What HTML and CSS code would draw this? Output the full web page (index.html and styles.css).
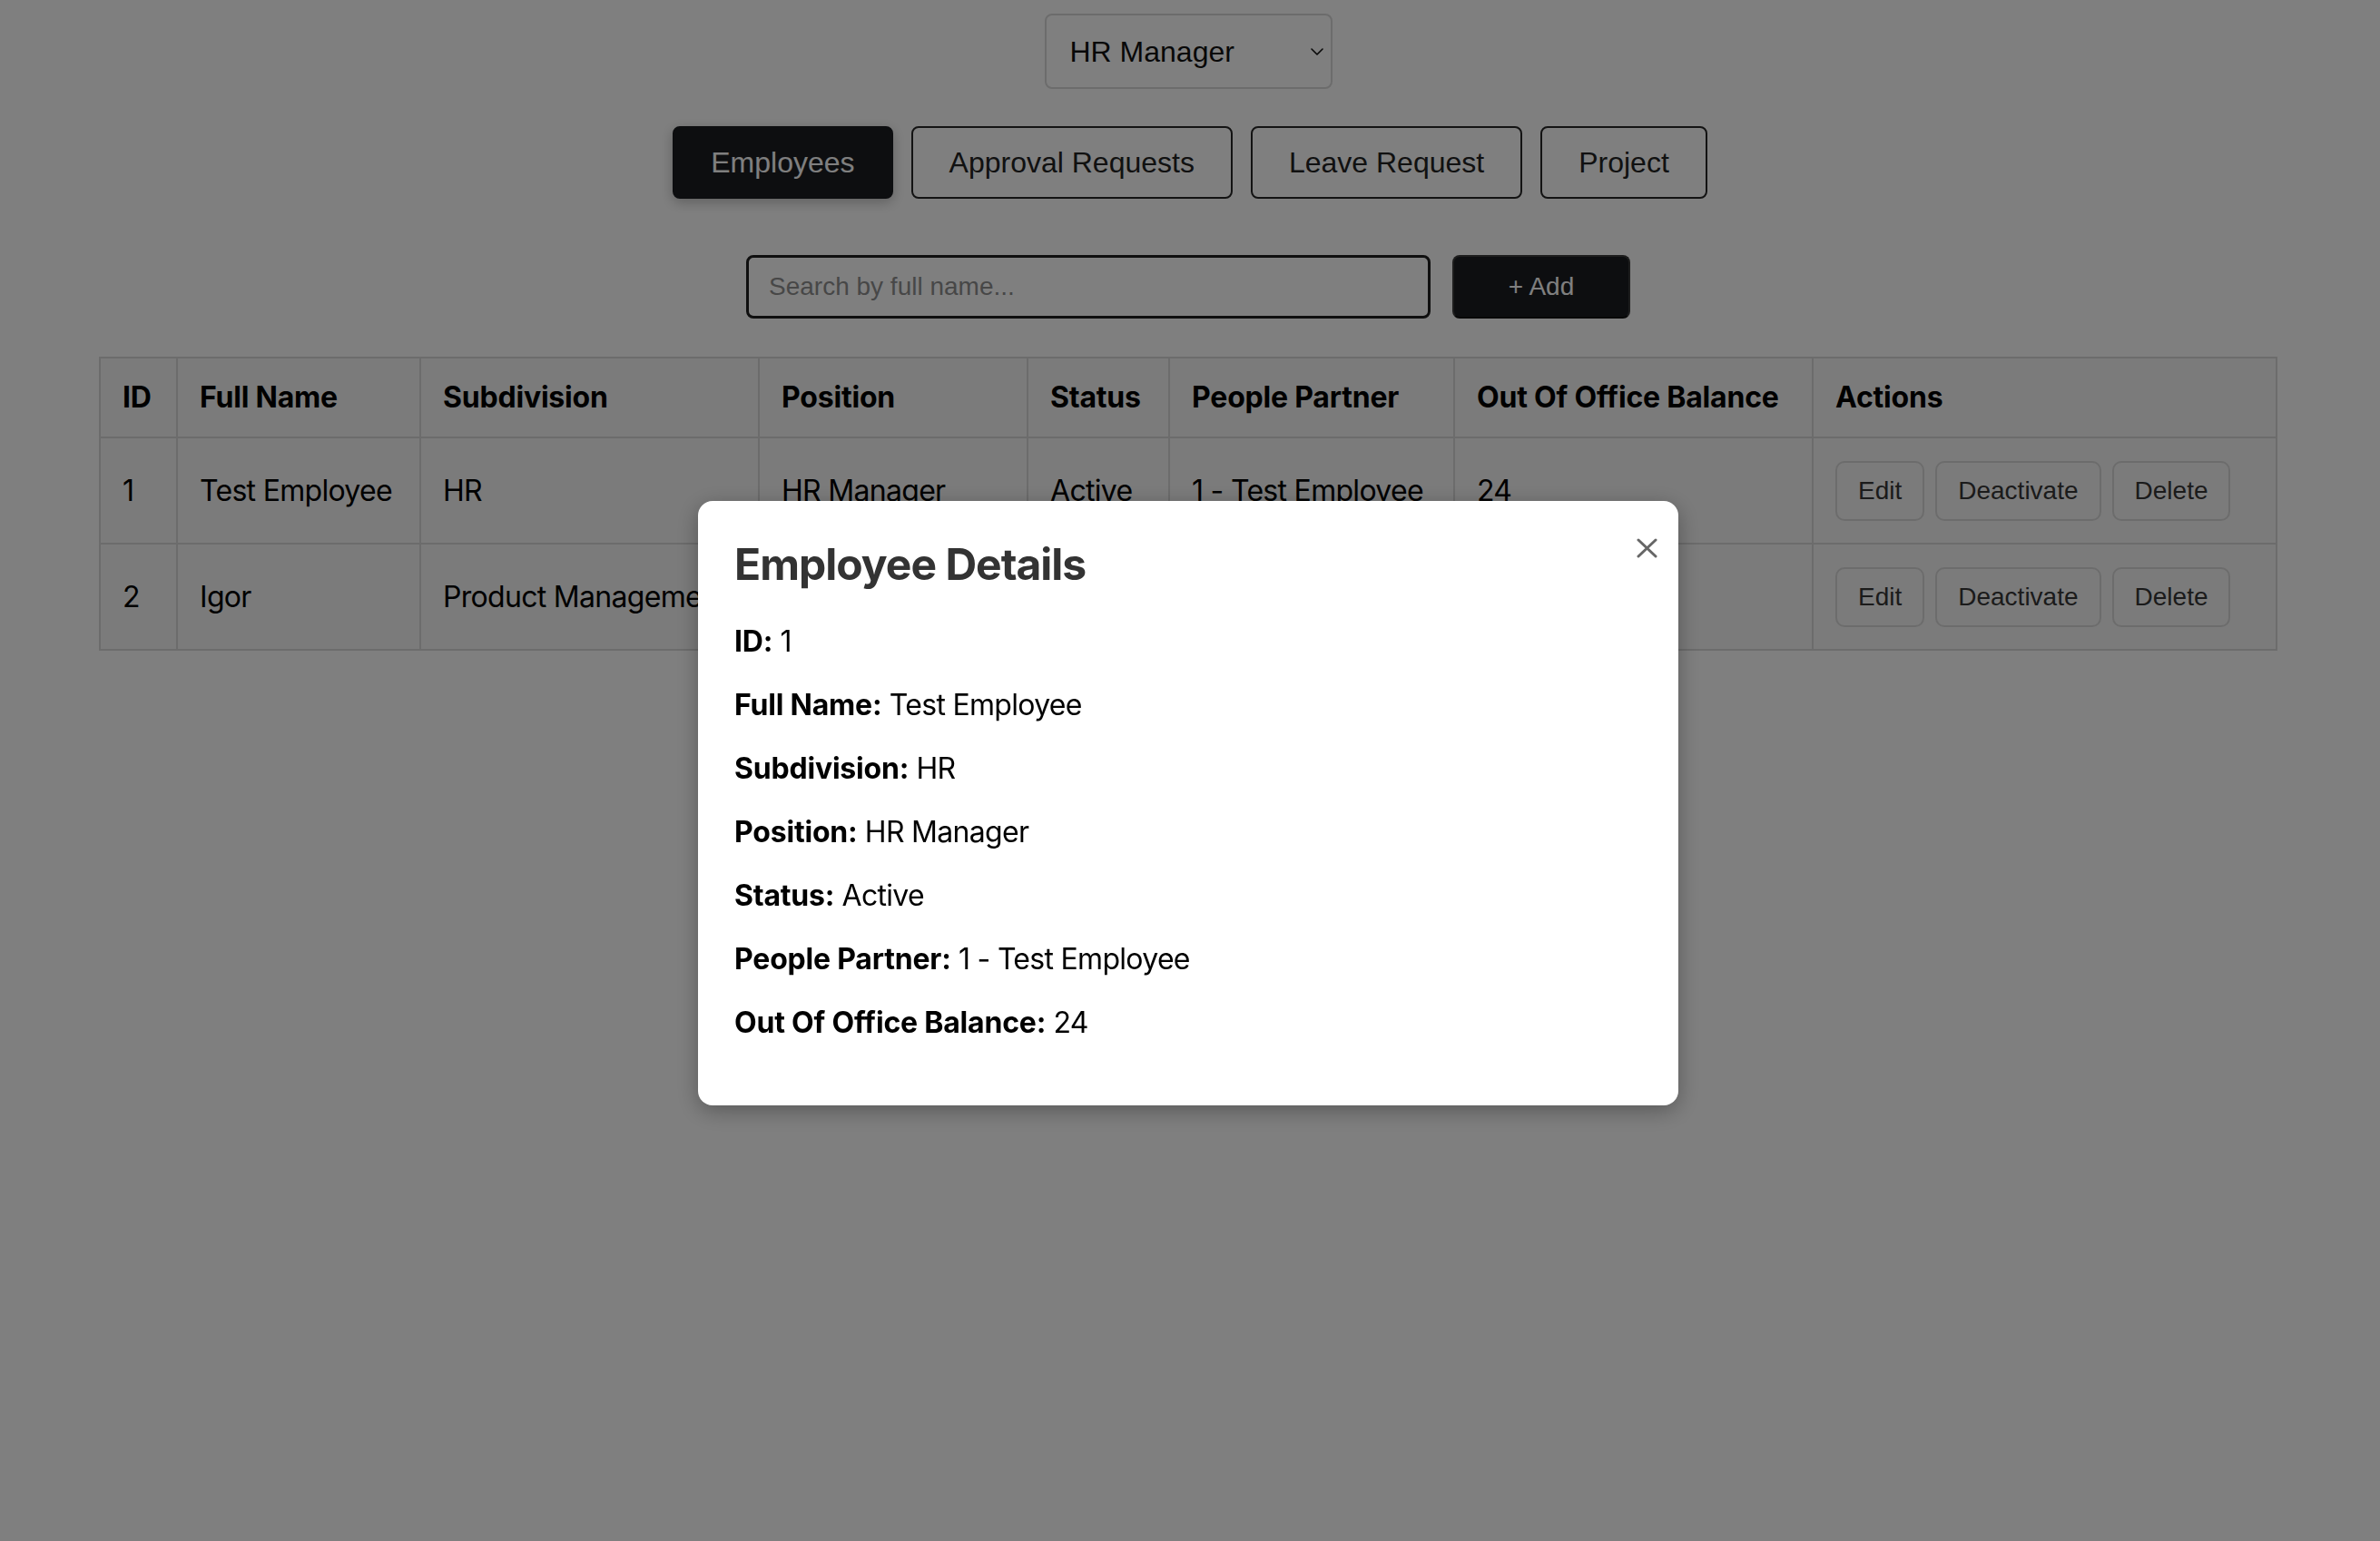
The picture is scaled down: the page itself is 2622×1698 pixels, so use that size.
FILE: index.html
```html
<!DOCTYPE html>
<html lang="en">
<head>
<meta charset="utf-8">
<title>Employees</title>
<link rel="stylesheet" href="styles.css">
</head>
<body>
<div class="app">
  <div class="role-select">
    <select class="role">
      <option>HR Manager</option>
      <option>Project Manager</option>
      <option>Employee</option>
    </select>
    <svg class="chev" viewBox="0 0 14 8" width="14" height="8" aria-hidden="true"><path d="M1 1 L7 7 L13 1" fill="none" stroke="#111" stroke-width="1.6" stroke-linecap="round" stroke-linejoin="round"/></svg>
  </div>

  <nav class="tabs">
    <button class="tab active">Employees</button>
    <button class="tab">Approval Requests</button>
    <button class="tab">Leave Request</button>
    <button class="tab">Project</button>
  </nav>

  <div class="toolbar">
    <input class="search" type="text" placeholder="Search by full name...">
    <button class="add">+ Add</button>
  </div>

  <table class="grid">
    <colgroup>
      <col class="c-id">
      <col class="c-name">
      <col class="c-sub">
      <col class="c-pos">
      <col class="c-status">
      <col class="c-pp">
      <col class="c-ooo">
      <col class="c-act">
    </colgroup>
    <thead>
      <tr>
        <th>ID</th>
        <th>Full Name</th>
        <th>Subdivision</th>
        <th>Position</th>
        <th>Status</th>
        <th>People Partner</th>
        <th>Out Of Office Balance</th>
        <th>Actions</th>
      </tr>
    </thead>
    <tbody>
      <tr>
        <td>1</td>
        <td>Test Employee</td>
        <td>HR</td>
        <td>HR Manager</td>
        <td>Active</td>
        <td>1 - Test Employee</td>
        <td>24</td>
        <td>
          <div class="actions">
            <button class="act">Edit</button>
            <button class="act">Deactivate</button>
            <button class="act">Delete</button>
          </div>
        </td>
      </tr>
      <tr>
        <td>2</td>
        <td>Igor</td>
        <td>Product Management</td>
        <td>Product Manager</td>
        <td>Active</td>
        <td>1 - Test Employee</td>
        <td></td>
        <td>
          <div class="actions">
            <button class="act">Edit</button>
            <button class="act">Deactivate</button>
            <button class="act">Delete</button>
          </div>
        </td>
      </tr>
    </tbody>
  </table>
</div>

<div class="overlay">
  <div class="modal">
    <button class="close" aria-label="Close">
      <svg viewBox="0 0 23 22" width="23" height="22" aria-hidden="true"><path d="M2 2 L21 20 M21 2 L2 20" fill="none" stroke="#666" stroke-width="3" stroke-linecap="round"/></svg>
    </button>
    <h2 class="modal-title">Employee Details</h2>
    <p class="row"><strong>ID:</strong> 1</p>
    <p class="row"><strong>Full Name:</strong> Test Employee</p>
    <p class="row"><strong>Subdivision:</strong> HR</p>
    <p class="row"><strong>Position:</strong> HR Manager</p>
    <p class="row"><strong>Status:</strong> Active</p>
    <p class="row"><strong>People Partner:</strong> 1 - Test Employee</p>
    <p class="row"><strong>Out Of Office Balance:</strong> 24</p>
  </div>
</div>
</body>
</html>
```

FILE: styles.css
```css
* { box-sizing: border-box; }

html, body {
  margin: 0;
  padding: 0;
  background: #ffffff;
}

body {
  font-family: Inter, "Noto Sans", sans-serif;
  color: #000;
  min-height: 1698px;
}

.app {
  display: flex;
  flex-direction: column;
  align-items: center;
  padding-top: 15px;
}

/* role select */
.role-select {
  position: relative;
  width: 317px;
  height: 83px;
  margin-bottom: 41px;
  margin-right: 4px;
}

.role {
  -webkit-appearance: none;
  appearance: none;
  width: 100%;
  height: 100%;
  border: 2px solid #d9d9d9;
  border-radius: 8px;
  background: #fff;
  font-family: "Liberation Sans", Arial, sans-serif;
  font-size: 32px;
  color: #111;
  padding: 0 0 0 26px;
}

.chev {
  position: absolute;
  right: 10px;
  top: 38px;
  pointer-events: none;
}

/* tabs */
.tabs {
  display: flex;
  gap: 20px;
  margin-bottom: 62px;
}

.tab {
  height: 80px;
  padding: 0 40px;
  border: 2px solid #262626;
  border-radius: 8px;
  background: #fff;
  font-family: "Liberation Sans", Arial, sans-serif;
  font-size: 32px;
  color: #222;
}

.tab.active {
  background: #1a1c20;
  border-color: #1a1c20;
  color: #fff;
  box-shadow: 0 4px 14px rgba(0, 0, 0, 0.25);
}

/* toolbar */
.toolbar {
  display: flex;
  align-items: center;
  gap: 24px;
  margin-bottom: 42px;
  margin-right: 4px;
}

.search {
  width: 754px;
  height: 70px;
  border: 3px solid #1e1e1e;
  border-radius: 8px;
  padding: 0 22px;
  font-family: "Liberation Sans", Arial, sans-serif;
  font-size: 28px;
  color: #111;
  background: #fff;
}

.search::placeholder {
  color: #8f8f8f;
}

.add {
  width: 196px;
  height: 70px;
  border: 2px solid #3a3a3a;
  border-bottom-color: #111;
  border-radius: 8px;
  background: #1a1c20;
  color: #fff;
  font-family: "Liberation Sans", Arial, sans-serif;
  font-size: 28px;
}

/* table */
.grid {
  border-collapse: collapse;
  table-layout: fixed;
  width: 2398px;
  margin: 0 auto;
  background: #f6f6f6;
  transform: translateX(-2px);
}

.c-id { width: 85px; }
.c-name { width: 268px; }
.c-sub { width: 373px; }
.c-pos { width: 296px; }
.c-status { width: 156px; }
.c-pp { width: 314px; }
.c-ooo { width: 395px; }
.c-act { width: 511px; }

.grid th,
.grid td {
  border: 2px solid #d8d8d8;
  padding: 24px;
  text-align: left;
  vertical-align: middle;
  font-size: 32px;
  line-height: 38px;
  white-space: nowrap;
  overflow: hidden;
}

.grid th {
  font-weight: 700;
  letter-spacing: -0.2px;
}

.grid td {
  font-weight: 400;
  letter-spacing: -0.7px;
}

.actions {
  display: flex;
  align-items: center;
  gap: 12px;
  height: 67px;
  letter-spacing: 0;
}

.act {
  height: 66px;
  padding: 0 23px;
  border: 2px solid #d9d9d9;
  border-radius: 10px;
  background: transparent;
  font-family: "Liberation Sans", Arial, sans-serif;
  font-size: 28px;
  color: #363636;
}

/* modal */
.overlay {
  position: fixed;
  inset: 0;
  background: rgba(0, 0, 0, 0.5);
  display: flex;
  justify-content: center;
  align-items: flex-start;
  padding-top: 552px;
}

.modal {
  position: relative;
  width: 1080px;
  padding: 40px;
  background: #fff;
  border-radius: 16px;
  box-shadow: 0 6px 24px rgba(0, 0, 0, 0.3);
  margin-right: 4px;
}

.close {
  position: absolute;
  top: 41px;
  right: 23px;
  width: 23px;
  height: 22px;
  padding: 0;
  border: 0;
  background: transparent;
  display: block;
}

.close svg {
  display: block;
}

.modal-title {
  margin: 0 0 37px;
  font-size: 48px;
  font-weight: 700;
  color: #333;
  line-height: normal;
  letter-spacing: -1px;
}

.row {
  margin: 32px 0;
  font-size: 32px;
  line-height: 38px;
  color: #000;
  letter-spacing: -0.7px;
}

.row strong {
  font-weight: 700;
  letter-spacing: -0.2px;
}
```
